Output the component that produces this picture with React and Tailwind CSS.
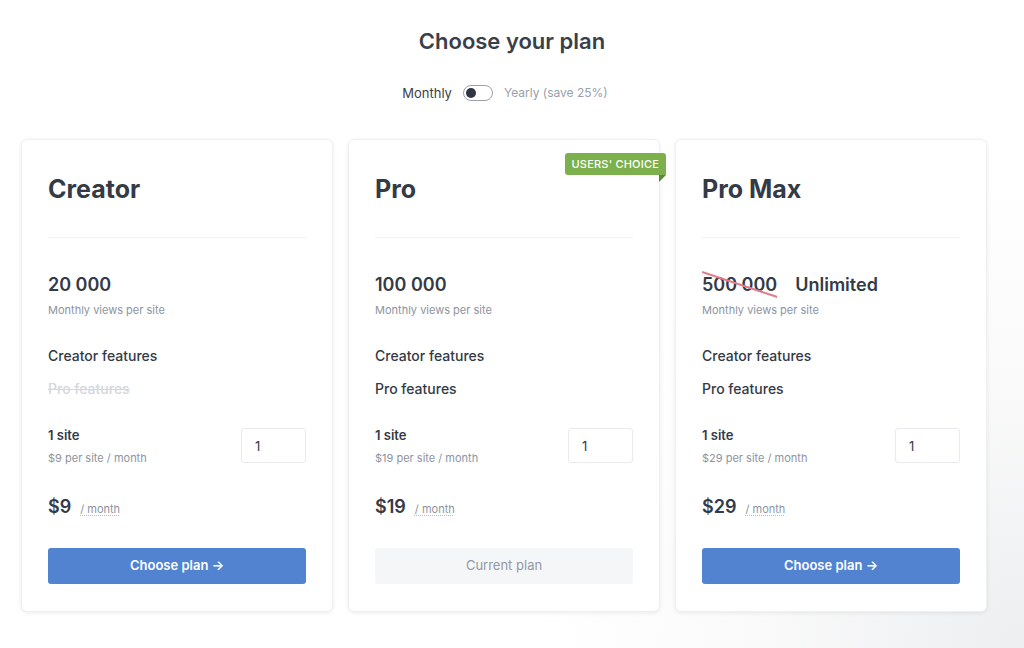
import React, { useState } from 'react';

const plans = [
  { name: 'Creator', views: '20 000', pro: false, price: 9, current: false },
  { name: 'Pro', views: '100 000', pro: true, price: 19, current: true, badge: true },
  { name: 'Pro Max', views: '500 000', pro: true, price: 29, current: false, unlimited: true },
];

function PlanCard({ plan }) {
  const [sites, setSites] = useState('1');

  return (
    <div className="relative w-[312px] rounded-md border border-[#eef0f2] bg-white px-[26px] pt-[33px] pb-[27px] shadow-[0_1px_4px_rgba(0,0,0,0.08)]">
      {plan.badge && (
        <div className="absolute top-[13px] right-[-7px]">
          <div className="rounded-[3px] rounded-br-none bg-[#7bb04c] px-[7px] h-[22px] flex items-center text-[11px] font-medium tracking-[0.2px] text-white">
            USERS' CHOICE
          </div>
          <div className="ml-auto h-0 w-0 border-t-[7px] border-r-[7px] border-t-[#5b8a32] border-r-transparent" />
        </div>
      )}

      <h2 className="text-[25px] leading-8 font-bold text-[#343a46]">{plan.name}</h2>
      <div className="mt-8 h-px bg-[#f1f2f4]" />

      <div className="mt-[35px] flex items-center gap-[18px]">
        <span className="relative text-[18px] leading-6 font-semibold text-[#343a46]">
          {plan.views}
          {plan.unlimited && (
            <svg className="absolute left-0 top-[-4px] h-[32px] w-full" viewBox="0 0 72 32" preserveAspectRatio="none">
              <line x1="0" y1="3" x2="72" y2="28" stroke="#e37c88" strokeWidth="2" />
            </svg>
          )}
        </span>
        {plan.unlimited && <span className="text-[18px] leading-6 font-semibold text-[#343a46]">Unlimited</span>}
      </div>
      <p className="mt-[5px] text-[11px] leading-4 text-[#8d94a0]">Monthly views per site</p>

      <p className="mt-7 text-[14px] leading-5 font-medium text-[#343a46]">Creator features</p>
      <p
        className={
          'mt-[13px] text-[14px] leading-5 font-medium ' +
          (plan.pro ? 'text-[#343a46]' : 'text-[#d4d7dc] line-through')
        }
      >
        Pro features
      </p>

      <div className="mt-7 flex items-start justify-between">
        <div>
          <p className="text-[13px] leading-4 font-semibold text-[#343a46]">1 site</p>
          <p className="mt-[7px] text-[11px] leading-4 text-[#8d94a0]">${plan.price} per site / month</p>
        </div>
        <input
          value={sites}
          onChange={(e) => setSites(e.target.value)}
          className="mt-px h-[35px] w-[65px] rounded-[3px] border border-[#e8eaed] px-[13px] text-[13px] text-[#343a46] outline-none"
        />
      </div>

      <div className="mt-[29px] flex items-baseline gap-[9px]">
        <span className="text-[18px] leading-6 font-semibold text-[#343a46]">${plan.price}</span>
        <span className="text-[11px] text-[#8d94a0] underline decoration-dotted decoration-[#b8bdc5] underline-offset-2">
          / month
        </span>
      </div>

      {plan.current ? (
        <button className="mt-[29px] h-9 w-full rounded-[3px] bg-[#f5f6f8] text-[13px] text-[#9299a5]">
          Current plan
        </button>
      ) : (
        <button className="mt-[29px] h-9 w-full rounded-[3px] bg-[#5183d0] text-[13px] font-semibold text-white">
          Choose plan →
        </button>
      )}
    </div>
  );
}

function App() {
  const [yearly, setYearly] = useState(false);

  return (
    <div className="min-h-[648px] bg-[radial-gradient(circle_at_100%_100%,#eceef0_0%,#fafafa_22%,#ffffff_40%)] font-['Inter','Liberation_Sans',sans-serif]">
      <h1 className="pt-[27px] text-center text-[22px] leading-7 font-semibold text-[#3a3f4a]">Choose your plan</h1>

      <div className="mt-[30px] flex items-center justify-center gap-[11px] pr-[14px] leading-4">
        <span className="text-[13px] text-[#3a3f4a]">Monthly</span>
        <button
          onClick={() => setYearly(!yearly)}
          className="flex h-4 w-[30px] items-center rounded-full border border-[#9aa0aa] px-[2px]"
        >
          <span className={'h-[10px] w-[10px] rounded-full bg-[#2f3544] ' + (yearly ? 'ml-auto' : '')} />
        </button>
        <span className="text-[12px] text-[#9aa0aa]">Yearly (save 25%)</span>
      </div>

      <div className="mt-[38px] flex gap-[15px] pl-[21px]">
        {plans.map((p) => (
          <PlanCard key={p.name} plan={p} />
        ))}
      </div>
    </div>
  );
}

export default App;
